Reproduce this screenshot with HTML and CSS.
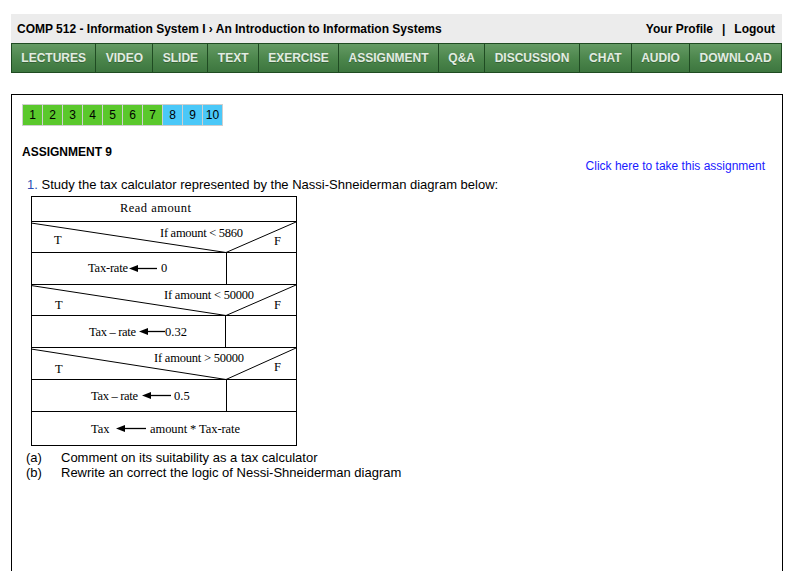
FILE: index.html
```html
<!DOCTYPE html>
<html>
<head>
<meta charset="utf-8">
<link rel="stylesheet" href="styles.css">
</head>
<body>
<div class="page">
  <div class="topbar">
    <div class="crumb">COMP 512 - Information System I › An Introduction to Information Systems</div>
    <div class="user"><span>Your Profile</span><span class="sep">|</span><span>Logout</span></div>
  </div>
  <nav class="nav">
    <a>LECTURES</a><a>VIDEO</a><a>SLIDE</a><a>TEXT</a><a>EXERCISE</a><a>ASSIGNMENT</a><a>Q&amp;A</a><a>DISCUSSION</a><a>CHAT</a><a>AUDIO</a><a>DOWNLOAD</a>
  </nav>
  <div class="content">
    <div class="pager">
      <span class="done">1</span><span class="done">2</span><span class="done">3</span><span class="done">4</span><span class="done">5</span><span class="done">6</span><span class="done">7</span><span class="todo">8</span><span class="todo">9</span><span class="todo">10</span>
    </div>
    <h2 class="title">ASSIGNMENT 9</h2>
    <div class="take"><a>Click here to take this assignment</a></div>
    <div class="question"><span class="num">1.</span> Study the tax calculator represented by the Nassi-Shneiderman diagram below:</div>
    <svg class="ns" width="266" height="251" viewBox="0 0 266 251" xmlns="http://www.w3.org/2000/svg">
      <g stroke="#000" stroke-width="1" fill="none">
        <rect x="0.5" y="0.5" width="265" height="249"/>
        <line x1="0" y1="25.5" x2="266" y2="25.5"/>
        <line x1="0" y1="56.5" x2="266" y2="56.5"/>
        <line x1="0" y1="88.5" x2="266" y2="88.5"/>
        <line x1="0" y1="119.5" x2="266" y2="119.5"/>
        <line x1="0" y1="151.5" x2="266" y2="151.5"/>
        <line x1="0" y1="183.5" x2="266" y2="183.5"/>
        <line x1="0" y1="215.5" x2="266" y2="215.5"/>
        <polyline points="0,27 195,56.5 265,26"/>
        <polyline points="0,89.5 195,119.5 265,89"/>
        <polyline points="0,153 195,183.5 265,152"/>
        <line x1="195.5" y1="56" x2="195.5" y2="88"/>
        <line x1="194.5" y1="119" x2="194.5" y2="151"/>
        <line x1="195.5" y1="183" x2="195.5" y2="215"/>
        <line x1="106" y1="72.5" x2="126" y2="72.5" stroke-width="1.3"/>
        <line x1="116" y1="135.5" x2="134" y2="135.5" stroke-width="1.3"/>
        <line x1="119" y1="199.5" x2="140" y2="199.5" stroke-width="1.3"/>
        <line x1="93" y1="232.5" x2="115" y2="232.5" stroke-width="1.3"/>
      </g>
      <g fill="#000">
        <polygon points="98,72.5 107,69 107,76"/>
        <polygon points="108,135.5 117,132 117,139"/>
        <polygon points="111,199.5 120,196 120,203"/>
        <polygon points="85,232.5 94,229 94,236"/>
      </g>
      <g class="nst">
        <text x="89" y="16" textLength="71">Read amount</text>
        <text x="129" y="41" textLength="83">If amount &lt; 5860</text>
        <text x="23" y="48">T</text>
        <text x="243" y="49">F</text>
        <text x="57" y="76" textLength="40">Tax-rate</text>
        <text x="130" y="76">0</text>
        <text x="133" y="103" textLength="90">If amount &lt; 50000</text>
        <text x="24" y="113">T</text>
        <text x="243" y="113">F</text>
        <text x="58" y="140" textLength="47">Tax – rate</text>
        <text x="134" y="140">0.32</text>
        <text x="123" y="166" textLength="90">If amount &gt; 50000</text>
        <text x="24" y="177">T</text>
        <text x="243" y="175">F</text>
        <text x="60" y="204" textLength="47">Tax – rate</text>
        <text x="143" y="204">0.5</text>
        <text x="60" y="237">Tax</text>
        <text x="119" y="237" textLength="90">amount * Tax-rate</text>
      </g>
    </svg>
    <div class="subs">
      <div class="sub"><span class="lbl">(a)</span><span>Comment on its suitability as a tax calculator</span></div>
      <div class="sub"><span class="lbl">(b)</span><span>Rewrite an correct the logic of Nessi-Shneiderman diagram</span></div>
    </div>
  </div>
</div>
</body>
</html>
```
FILE: styles.css
```css
html, body {
  margin: 0;
  padding: 0;
  background: #ffffff;
  font-family: "Liberation Sans", Arial, sans-serif;
  color: #000;
}
.page {
  padding: 14px 9px 0 11px;
}
.topbar {
  width: 771px;
  height: 29px;
  background: #ececec;
  display: flex;
  align-items: center;
  justify-content: space-between;
  box-sizing: border-box;
  padding: 0 7px 0 6px;
  font-size: 12px;
  font-weight: bold;
}
.user .sep {
  margin: 0 9px;
}
.nav {
  width: 771px;
  height: 30px;
  display: flex;
}
.nav a {
  flex: 1 1 auto;
  display: flex;
  align-items: center;
  justify-content: center;
  padding: 0 9px;
  background: linear-gradient(#649a64, #4b854b 55%, #3d763f);
  border: 1px solid #1f4b22;
  border-left-width: 0;
  color: #e2ece2;
  font-size: 12px;
  font-weight: bold;
  text-shadow: 0 1px 0 rgba(0,0,0,0.25);
}
.nav a:first-child {
  border-left-width: 1px;
}
.content {
  margin-top: 21px;
  width: 772px;
  height: 480px;
  box-sizing: border-box;
  border: 1px solid #000;
  padding: 9px 17px 0 10px;
}
.pager {
  display: flex;
  width: max-content;
  border: 1px solid #cfcfcf;
  border-right-width: 0;
}
.pager span {
  width: 19px;
  height: 20px;
  display: flex;
  align-items: center;
  justify-content: center;
  font-size: 12px;
  border-right: 1px solid #cfcfcf;
}
.pager .done {
  background: #5ac82c;
}
.pager .todo {
  background: #4ac8f8;
}
.title {
  margin: 19px 0 0 0;
  font-size: 12px;
  font-weight: bold;
  line-height: 14px;
}
.take {
  text-align: right;
  font-size: 12px;
  line-height: 14px;
  margin-top: 0;
}
.take a {
  color: #1a1aff;
}
.question {
  font-size: 13px;
  line-height: 15px;
  margin: 4px 0 0 5px;
}
.question .num {
  color: #2d4fb4;
}
.ns {
  display: block;
  margin: 4px 0 0 9px;
}
.nst text {
  font-family: "Liberation Serif", "Times New Roman", serif;
  font-size: 12.5px;
  fill: #000;
}
.subs {
  margin: 3px 0 0 4px;
}
.sub {
  display: flex;
  font-size: 13px;
  line-height: 15px;
}
.sub .lbl {
  width: 35px;
}
```
